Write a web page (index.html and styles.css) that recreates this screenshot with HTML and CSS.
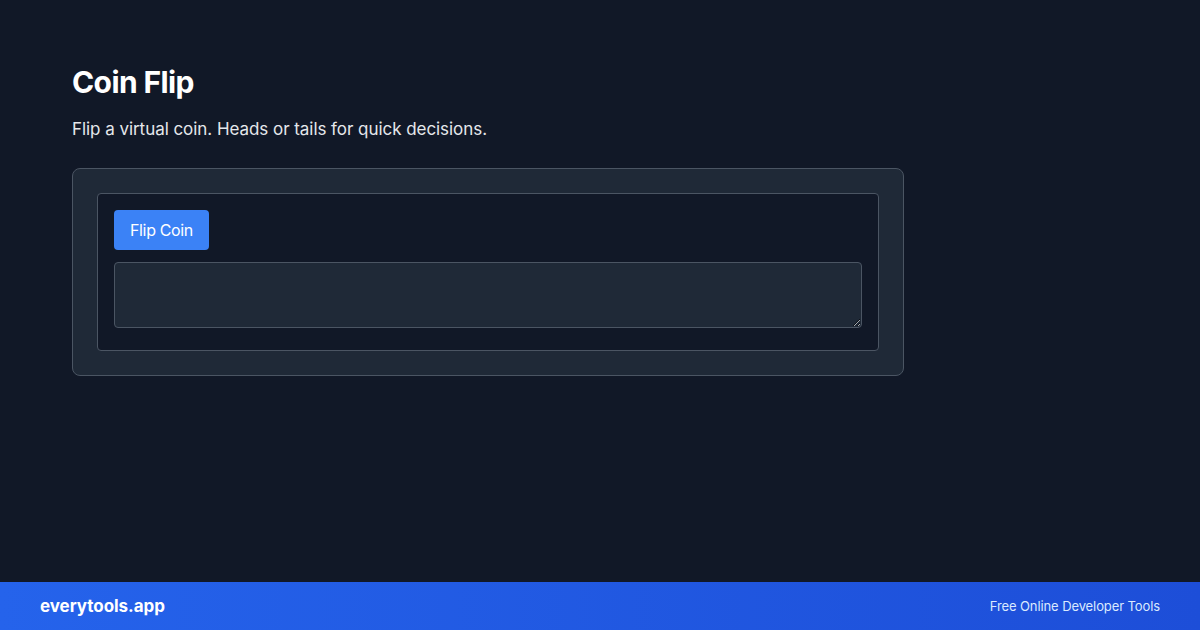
FILE: index.html
```html
<!DOCTYPE html>
<html lang="en">
<head>
<meta charset="utf-8">
<title>Coin Flip</title>
<link rel="stylesheet" href="styles.css">
</head>
<body>
<main class="main">
  <h1 class="title">Coin Flip</h1>
  <p class="subtitle">Flip a virtual coin. Heads or tails for quick decisions.</p>
  <section class="card">
    <div class="panel">
      <button class="btn" type="button">Flip Coin</button>
      <textarea class="output" readonly></textarea>
    </div>
  </section>
</main>
<footer class="footer">
  <span class="brand">everytools.app</span>
  <span class="tagline">Free Online Developer Tools</span>
</footer>
</body>
</html>
```

FILE: styles.css
```css
* { box-sizing: border-box; }
html, body { margin: 0; padding: 0; }
body {
  width: 1200px;
  height: 630px;
  background: #111827;
  color: #ffffff;
  font-family: Inter, "Noto Sans", sans-serif;
  display: flex;
  flex-direction: column;
  overflow: hidden;
}
.main {
  flex: 1;
  padding: 64px 72px 0;
}
.title {
  margin: 0 0 15px;
  font-size: 30px;
  line-height: 36px;
  font-weight: 700;
  letter-spacing: -0.6px;
  color: #ffffff;
}
.subtitle {
  margin: 0 0 25px;
  font-size: 17px;
  line-height: 28px;
  letter-spacing: -0.05px;
  color: #e5e7eb;
}
.card {
  width: 832px;
  background: #1f2937;
  border: 1px solid #4b5563;
  border-radius: 8px;
  padding: 24px;
}
.panel {
  background: #111827;
  border: 1px solid #4b5563;
  border-radius: 4px;
  padding: 16px 16px 22px;
}
.btn {
  display: block;
  height: 40px;
  padding: 0 16px;
  background: #3b82f6;
  color: #ffffff;
  border: none;
  border-radius: 4px;
  font-family: Inter, "Noto Sans", sans-serif;
  font-size: 16px;
  letter-spacing: -0.35px;
}
.output {
  display: block;
  width: 100%;
  height: 66px;
  margin-top: 12px;
  background: #1f2937;
  border: 1px solid #4b5563;
  border-radius: 4px;
  color: #ffffff;
  resize: vertical;
}
.footer {
  height: 48px;
  flex: none;
  padding: 0 40px;
  display: flex;
  align-items: center;
  justify-content: space-between;
  background: linear-gradient(90deg, #2563eb, #1d4ed8);
}
.brand {
  font-size: 17px;
  font-weight: 700;
  letter-spacing: -0.05px;
  color: #ffffff;
}
.tagline {
  font-size: 13px;
  letter-spacing: -0.1px;
  color: #dbeafe;
}
```
